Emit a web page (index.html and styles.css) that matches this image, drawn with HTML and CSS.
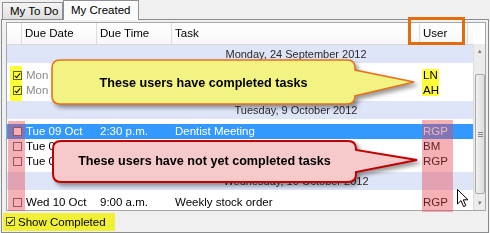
FILE: index.html
```html
<!DOCTYPE html>
<html>
<head>
<meta charset="utf-8">
<link rel="stylesheet" href="styles.css">
</head>
<body>
<div class="window">
  <div class="tabs">
    <div class="tab">My To Do</div>
    <div class="tab active">My Created</div>
  </div>
  <div class="panel">
    <div class="grid">
      <div class="main">
        <div class="header cols">
          <div class="hcell"></div>
          <div class="hcell">Due Date</div>
          <div class="hcell">Due Time</div>
          <div class="hcell">Task</div>
          <div class="hcell">User</div>
          <div class="hcell last"></div>
        </div>
        <div class="body">
          <div class="group first">Monday, 24 September 2012</div>
          <div class="rows">
            <div class="row cols done"><span class="cbcell"><span class="cb checked"></span></span><span>Mon</span><span></span><span></span><span class="user">LN</span><span></span></div>
            <div class="row cols done"><span class="cbcell"><span class="cb checked"></span></span><span>Mon</span><span></span><span></span><span class="user">AH</span><span></span></div>
          </div>
          <div class="group">Tuesday, 9 October 2012</div>
          <div class="rows">
            <div class="row cols selected"><span class="cbcell"><span class="cb"></span></span><span>Tue 09 Oct</span><span>2:30 p.m.</span><span>Dentist Meeting</span><span class="user">RGP</span><span></span></div>
            <div class="row cols"><span class="cbcell"><span class="cb"></span></span><span>Tue 0</span><span></span><span></span><span class="user">BM</span><span></span></div>
            <div class="row cols"><span class="cbcell"><span class="cb"></span></span><span>Tue 0</span><span></span><span></span><span class="user">RGP</span><span></span></div>
          </div>
          <div class="group">Wednesday, 10 October 2012</div>
          <div class="rows">
            <div class="row cols"><span class="cbcell"><span class="cb"></span></span><span>Wed 10 Oct</span><span>9:00 a.m.</span><span>Weekly stock order</span><span class="user">RGP</span><span></span></div>
          </div>
        </div>
      </div>
      <div class="scrollbar">
        <div class="arrow up">&#9652;</div>
        <div class="track"><div class="thumb"><span class="grip"></span></div></div>
        <div class="arrow down">&#9662;</div>
      </div>
    </div>
    <div class="footer">
      <span class="cb checked"></span><span class="footer-label">Show Completed</span>
    </div>
  </div>

  <div class="hl hl-yellow hl-cb-done"></div>
  <div class="hl hl-yellow hl-user-done"></div>
  <div class="hl hl-yellow hl-footer"></div>
  <div class="hl hl-red hl-cb-todo"></div>
  <div class="hl hl-red hl-user-todo"></div>
  <div class="orange-box"></div>

  <svg class="shapes" width="490" height="233" viewBox="0 0 490 233">
    <path class="callout-yellow" d="M60,60 H347 Q355,60 355,68 V70 L414,82 L355,96 V96 Q355,104 347,104 H60 Q52,104 52,96 V68 Q52,60 60,60 Z"/>
    <path class="callout-red" d="M61,141 H348 Q356,141 356,149 V150 L417,160 L356,172 V174 Q356,182 348,182 H61 Q53,182 53,174 V149 Q53,141 61,141 Z"/>
  </svg>
  <div class="callout-text text-yellow">These users have completed tasks</div>
  <div class="callout-text text-red">These users have not yet completed tasks</div>

  <svg class="cursor" width="13" height="19" viewBox="0 0 13 19">
    <path d="M0.5,0.5 V15 L4,11.6 L6.6,17.6 L8.8,16.7 L6.3,10.8 H11 Z" fill="#fff" stroke="#000" stroke-width="1" stroke-linejoin="round"/>
  </svg>
</div>
</body>
</html>
```

FILE: styles.css
```css
* { box-sizing: border-box; margin: 0; padding: 0; }
html, body { width: 490px; height: 233px; overflow: hidden; }
body {
  background: #f0f0f0;
  font-family: "Liberation Sans", Arial, sans-serif;
  font-size: 11.5px;
  color: #000;
}
.window { position: relative; width: 490px; height: 233px; }

/* tabs */
.tabs { display: flex; align-items: flex-end; height: 19px; padding-left: 2px; position: relative; z-index: 2; }
.tab {
  height: 17px; width: 61px; padding-left: 7px; line-height: 16px;
  border: 1px solid #8e9096; border-bottom: none;
  background: linear-gradient(#f4f4f4, #dedede);
}
.tab.active {
  height: 20px; width: 76px; padding-left: 7px; line-height: 18px;
  margin-bottom: -1px; background: #fbfbfb;
}

/* panel */
.panel {
  margin-left: 1px; width: 488px; height: 214px;
  border: 1px solid #8a8c90; background: #f0f0f0;
  padding: 2px 0 0 4px;
}
.grid {
  width: 480px; height: 189px; border: 1px solid #a3a6ab; background: #fff;
  display: flex; overflow: hidden;
}
.main { width: 466px; display: flex; flex-direction: column; }
.cols { display: grid; grid-template-columns: 15px 75px 75px 248px 48px 5px; }
.header { height: 22px; border-bottom: 1px solid #d8d8d8; background: linear-gradient(#fff, #f7f7f7); }
.hcell { border-right: 1px solid #dcdcdc; line-height: 21px; padding-left: 3px; white-space: nowrap; }
.hcell.last { border-right: none; }

.body { flex: 1; overflow: hidden; }
.group {
  height: 18px; line-height: 19px; background: #dfe5f8; color: #2a2a2a;
  font-size: 11px; text-align: center; padding-left: 112px; margin-top: 3px;
}
.group.first { margin-top: 0; }
.rows { padding-top: 5px; }
.row { height: 15px; line-height: 15px; white-space: nowrap; }
.row > span { padding-left: 3px; overflow: hidden; }
.row > span:nth-child(2) { padding-left: 4px; }
.row .cbcell { padding-left: 6px; display: flex; align-items: center; }
.row.done { color: #8a8a8a; }
.row.done .user { color: #000; }
.row.selected { background: #3399ff; color: #fff; }

.cb {
  display: inline-block; width: 9px; height: 9px; border: 1px solid #5a6470;
  background: #fff; position: relative; flex: none;
}
.cb.checked::after {
  content: ""; position: absolute; left: 2px; top: 0px; width: 2px; height: 5px;
  border: solid #000; border-width: 0 1.5px 1.5px 0; transform: rotate(40deg);
}

/* scrollbar */
.scrollbar {
  width: 12px; margin-top: 21px; border-left: 1px solid #dcdcdc; background: #ececec;
  display: flex; flex-direction: column;
}
.arrow { height: 14px; font-size: 7px; color: #7a7a7a; text-align: center; line-height: 14px; }
.track { flex: 1; padding: 16px 0 2px 1px; display: flex; }
.thumb {
  flex: 1; border: 1px solid #a9a9a9; border-radius: 2px;
  background: linear-gradient(90deg, #f2f2f2, #dcdcdc);
  display: flex; align-items: center; justify-content: center;
}
.grip { width: 5px; height: 5px; border-top: 1px solid #888; border-bottom: 1px solid #888; position: relative; }
.grip::after { content: ""; position: absolute; left: 0; right: 0; top: 1px; border-top: 1px solid #888; }

/* footer */
.footer { height: 20px; display: flex; align-items: center; padding-top: 1px; }
.footer .cb { margin-right: 3px; }
.footer-label { line-height: 16px; }

/* highlights */
.hl { position: absolute; }
.hl-yellow { background: rgba(255, 255, 0, 0.78); mix-blend-mode: multiply; }
.hl-red { background: rgba(232, 70, 80, 0.42); }
.hl-cb-done { left: 10px; top: 66px; width: 12px; height: 35px; }
.hl-user-done { left: 422px; top: 69px; width: 17px; height: 27px; }
.hl-footer { left: 3px; top: 213px; width: 112px; height: 18px; }
.hl-cb-todo { left: 8px; top: 121px; width: 17px; height: 90px; }
.hl-user-todo { left: 422px; top: 120px; width: 31px; height: 92px; }
.orange-box { position: absolute; left: 408px; top: 17px; width: 57px; height: 28px; border: 3px solid #e46c0a; }

/* callouts */
.shapes { position: absolute; left: 0; top: 0; }
.callout-yellow { fill: #f3f383; stroke: #e3731f; stroke-width: 1.6; filter: drop-shadow(3px 3px 2px rgba(0,0,0,0.4)); }
.callout-red { fill: #f6c9ca; stroke: #c00000; stroke-width: 2; filter: drop-shadow(3px 3px 2px rgba(0,0,0,0.4)); }
.callout-text {
  position: absolute; font-weight: bold; font-size: 12.6px; text-align: center; white-space: nowrap;
  line-height: 16px;
}
.text-yellow { left: 52px; width: 303px; top: 75px; }
.text-red { left: 53px; width: 303px; top: 153px; }
.cursor { position: absolute; left: 457px; top: 189px; }
```
